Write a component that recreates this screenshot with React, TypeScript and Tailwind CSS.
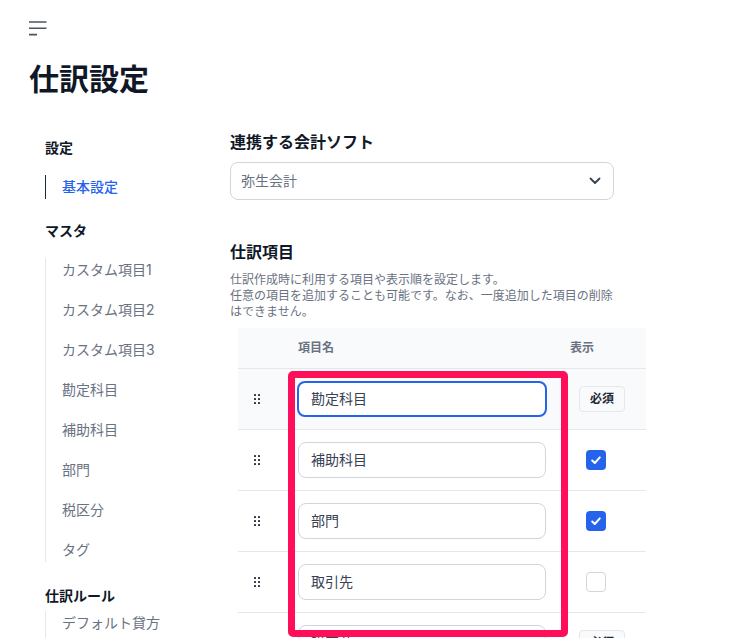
import React from "react";

const font = { fontFamily: 'Inter, "Noto Sans CJK JP", sans-serif' };

function Grip() {
  return (
    <svg width="6" height="10" viewBox="0 0 6 10" className="fill-gray-800">
      {[0, 4, 8].map((y) =>
        [0, 4].map((x) => <rect key={`${x}-${y}`} x={x} y={y} width="2" height="2" rx="0.4" />)
      )}
    </svg>
  );
}

function Check() {
  return (
    <span className="ml-10 flex h-5 w-5 items-center justify-center rounded bg-[#2563eb]">
      <svg width="12" height="12" viewBox="0 0 12 12" fill="none" stroke="white" strokeWidth="2" strokeLinecap="round" strokeLinejoin="round">
        <path d="M2.2 6.5 4.8 9 9.8 3.4" />
      </svg>
    </span>
  );
}

function Required() {
  return (
    <span className="ml-[33px] flex h-[26px] w-[46px] items-center justify-center rounded border border-gray-200 bg-gray-50 text-xs font-semibold text-gray-800">
      必須
    </span>
  );
}

function Row({ name, right, focused, tinted }: { name: string; right: React.ReactNode; focused?: boolean; tinted?: boolean }) {
  return (
    <div className={`flex h-[61px] shrink-0 items-center border-b border-gray-200 ${tinted ? "bg-gray-50" : ""}`}>
      <div className="flex w-[60px] shrink-0 pl-4"><Grip /></div>
      <div
        className={`flex h-9 shrink-0 items-center rounded-lg bg-white text-sm text-gray-700 ${
          focused ? "-ml-px w-[250px] border-2 border-[#2563eb] pl-[12px]" : "w-[248px] border border-gray-300 pl-3"
        }`}
      >
        {name}
      </div>
      <div className={`flex flex-1 items-center ${focused ? "-ml-px" : ""}`}>{right}</div>
    </div>
  );
}

function NavItem({ label, active }: { label: string; active?: boolean }) {
  return (
    <div className={`flex h-6 items-center pl-4 text-sm ${active ? "font-medium text-[#2563eb]" : "text-gray-500"}`}>{label}</div>
  );
}

export default function App() {
  const master = ["カスタム項目1", "カスタム項目2", "カスタム項目3", "勘定科目", "補助科目", "部門", "税区分", "タグ"];
  return (
    <div className="relative h-[638px] w-[751px] overflow-hidden bg-white" style={font}>
      <div className="px-[29px] pt-[21px]">
        <svg width="18" height="15" viewBox="0 0 18 15" fill="none" stroke="#4b5563" strokeWidth="1.6">
          <path d="M0 1h17.5M0 7.2h17.5M0 13.6h8" />
        </svg>
        <h1 className="mt-[21px] text-[30px] leading-[44px] font-semibold text-gray-900">仕訳設定</h1>
      </div>

      <div className="mt-[29px] flex">
        <nav className="ml-[45px] w-[185px] shrink-0 pt-2">
          <div className="text-sm leading-5 font-semibold text-gray-900">設定</div>
          <div className="mt-[17px] border-l border-gray-800"><NavItem label="基本設定" active /></div>
          <div className="mt-[22px] text-sm leading-5 font-semibold text-gray-900">マスタ</div>
          <div className="mt-[17px] flex flex-col gap-4 border-l border-gray-200">
            {master.map((m) => <NavItem key={m} label={m} />)}
          </div>
          <div className="mt-6 text-sm leading-5 font-semibold text-gray-900">仕訳ルール</div>
          <div className="mt-4 border-l border-gray-200 pb-1">
            <div className="-mt-[11px]"><NavItem label="デフォルト貸方" /></div>
          </div>
        </nav>

        <main className="w-[416px] shrink-0">
          <h2 className="text-base leading-6 font-semibold text-gray-900">連携する会計ソフト</h2>
          <div className="mt-2 flex h-[38px] w-[384px] items-center justify-between rounded-lg border border-gray-300 pr-[12px] pl-[10px] text-sm text-gray-500">
            弥生会計
            <svg width="12" height="8" viewBox="0 0 12 8" fill="none" stroke="#374151" strokeWidth="1.8" strokeLinecap="round" strokeLinejoin="round">
              <path d="M1.5 1.5 6 6l4.5-4.5" />
            </svg>
          </div>
          <h2 className="mt-[40px] text-base leading-6 font-semibold text-gray-900">仕訳項目</h2>
          <p className="mt-2 w-[384px] text-xs leading-4 text-gray-500">
            仕訳作成時に利用する項目や表示順を設定します。<br />
            任意の項目を追加することも可能です。なお、一度追加した項目の削除はできません。
          </p>
          <div className="mt-2 ml-2 flex w-[408px] flex-col">
            <div className="flex h-[41px] shrink-0 items-center border-b border-gray-200 bg-gray-50 text-xs font-semibold text-gray-500">
              <div className="w-[60px] shrink-0" />
              <div className="w-[248px] shrink-0">項目名</div>
              <div className="ml-6">表示</div>
            </div>
            <Row name="勘定科目" right={<Required />} focused tinted />
            <Row name="補助科目" right={<Check />} />
            <Row name="部門" right={<Check />} />
            <Row name="取引先" right={<span className="ml-10 h-5 w-5 rounded border border-gray-300 bg-white" />} />
            <Row name="税区分" right={<Required />} />
          </div>
        </main>
      </div>

      <div className="absolute top-[371px] left-[288px] h-[266px] w-[280px] rounded-[5px] border-[7px] border-[#ff0f5a]" />
    </div>
  );
}
